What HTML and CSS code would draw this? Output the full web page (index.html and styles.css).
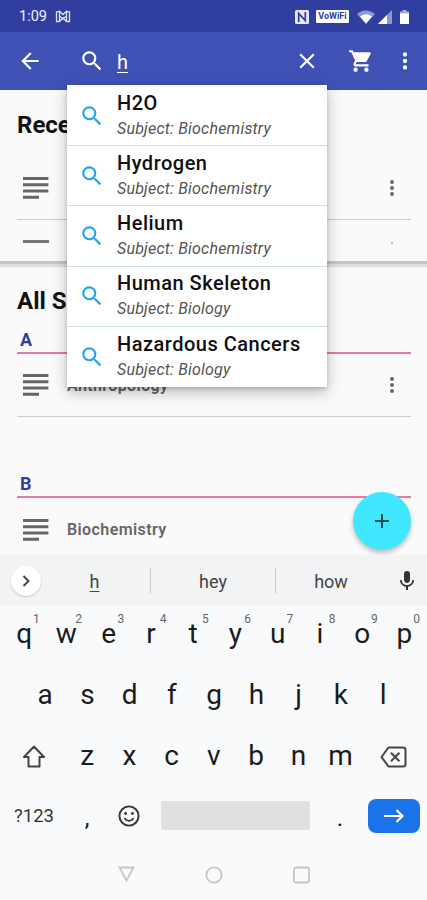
FILE: index.html
```
<!DOCTYPE html>
<html lang="en">
<head>
    <meta charset="UTF-8">
    <meta name="viewport" content="width=device-width, initial-scale=1.0">
    <title>Search</title>
    <link rel="stylesheet" href="styles.css">
</head>
<body>
    <!-- Shared icons -->
    <svg class="sprite">
        <symbol id="search" viewBox="0 0 24 24"><path d="M15.5 14h-.79l-.28-.27A6.47 6.47 0 0 0 16 9.5 6.5 6.5 0 1 0 9.5 16c1.61 0 3.09-.59 4.23-1.57l.27.28v.79l5 4.99L20.49 19l-4.99-5zm-6 0a4.5 4.5 0 1 1 0-9 4.5 4.5 0 0 1 0 9z"/></symbol>
        <symbol id="more" viewBox="0 0 24 24"><path d="M12 8a2 2 0 1 0 0-4 2 2 0 0 0 0 4zm0 2a2 2 0 1 0 0 4 2 2 0 0 0 0-4zm0 6a2 2 0 1 0 0 4 2 2 0 0 0 0-4z"/></symbol>
        <symbol id="lines" viewBox="0 0 26 22"><path d="M0 0h25.4v3H0zM0 6.3h25.4v3H0zM0 12.6h25.4v3H0zM0 18.8h16v3H0z"/></symbol>
    </svg>

    <div class="status">
        <span class="time">1:09</span>
        <svg class="notif" width="16" height="13" viewBox="0 0 16 13"><path d="M1.5 11.5v-9.500l3-.8L8 4.500l3.500-3.300 3 .8v9.500h-3V6L8 9 4.500 6v5.500z M4.500 6V2M11.500 6V2M5 11l3-3 3 3" fill="none" stroke="#dfe2f5" stroke-width="1.300"/></svg>
        <span class="spacer"></span>
        <svg class="nfc" width="14" height="14" viewBox="0 0 14 14"><rect width="14" height="14" rx="1.500" fill="#e6e8f7"/><path d="M3.700 12V3.500l6.600 7V2" fill="none" stroke="#303f9f" stroke-width="1.700"/></svg>
        <span class="vowifi">VoWiFi</span>
        <svg class="wifi" width="18" height="14" viewBox="0 0 18 14"><path d="M0 4a13 13 0 0 1 18 0L9 14z" fill="#8f98d0"/><path d="M3 6.500a9.500 9.500 0 0 1 12 0L9 13.500z" fill="#fff"/></svg>
        <svg class="signal" width="14" height="14" viewBox="0 0 14 14"><path d="M0 14L14 0v14z" fill="#8f98d0"/><path d="M0 14L9 5v9z" fill="#fff"/></svg>
        <svg class="battery" width="9" height="14" viewBox="0 0 9 14"><path d="M2.500 0h4v1.500H9V4H0V1.500h2.500z" fill="#a8afdb"/><path d="M0 3.500h9V14H0z" fill="#fff"/></svg>
    </div>

    <div class="toolbar">
        <svg class="icon back" viewBox="0 0 24 24"><path d="M20 11H7.830l5.590-5.590L12 4l-8 8 8 8 1.410-1.410L7.830 13H20z"/></svg>
        <svg class="icon find"><use href="#search"/></svg>
        <span class="query"><u>h</u></span>
        <svg class="icon clear" viewBox="0 0 24 24"><path d="M19 6.410L17.590 5 12 10.590 6.410 5 5 6.410 10.590 12 5 17.590 6.410 19 12 13.410 17.590 19 19 17.590 13.410 12z"/></svg>
        <svg class="icon cart" viewBox="0 0 24 24"><path d="M5.500 4.500h15L17 12.500H8.500z" fill="#fffbe6"/><path d="M7 18a2 2 0 1 0 0 4 2 2 0 0 0 0-4zM1 2v2h2l3.600 7.590-1.350 2.450C4.520 15.370 5.480 17 7 17h12v-2H7.420c-.14 0-.25-.11-.25-.25l.03-.12.900-1.630h7.450c.75 0 1.410-.41 1.750-1.030l3.580-6.490A1 1 0 0 0 20 4H5.210l-.94-2zm16 16a2 2 0 1 0 0 4 2 2 0 0 0 0-4z"/></svg>
        <svg class="icon"><use href="#more"/></svg>
    </div>

    <main class="content">
        <section class="recent">
            <h2>Recent</h2>
            <div class="item">
                <svg class="lines"><use href="#lines"/></svg>
                <span class="name"></span>
                <svg class="dots"><use href="#more"/></svg>
            </div>
            <div class="item collapsed">
                <span class="bar"></span>
                <span class="dot"></span>
            </div>
        </section>
        <section class="subjects">
            <h2>All Subjects</h2>
            <h3>A</h3>
            <div class="item">
                <svg class="lines"><use href="#lines"/></svg>
                <span class="name">Anthropology</span>
                <svg class="dots"><use href="#more"/></svg>
            </div>
            <h3 class="second">B</h3>
            <div class="item last">
                <svg class="lines"><use href="#lines"/></svg>
                <span class="name">Biochemistry</span>
            </div>
        </section>
        <button class="fab"><svg width="14" height="14" viewBox="0 0 14 14"><path d="M7 0v14M0 7h14" stroke="#1d4a55" stroke-width="2"/></svg></button>
    </main>

    <div class="results">
        <div class="result">
            <svg class="icon"><use href="#search"/></svg>
            <div><b>H2O</b><i>Subject: Biochemistry</i></div>
        </div>
        <div class="result">
            <svg class="icon"><use href="#search"/></svg>
            <div><b>Hydrogen</b><i>Subject: Biochemistry</i></div>
        </div>
        <div class="result">
            <svg class="icon"><use href="#search"/></svg>
            <div><b>Helium</b><i>Subject: Biochemistry</i></div>
        </div>
        <div class="result">
            <svg class="icon"><use href="#search"/></svg>
            <div><b>Human Skeleton</b><i>Subject: Biology</i></div>
        </div>
        <div class="result">
            <svg class="icon"><use href="#search"/></svg>
            <div><b>Hazardous Cancers</b><i>Subject: Biology</i></div>
        </div>
    </div>

    <div class="keyboard">
        <div class="suggestions">
            <span class="expand"><svg width="8" height="12" viewBox="0 0 8 12"><path d="M1.500 1l5 5-5 5" fill="none" stroke="#444" stroke-width="2"/></svg></span>
            <span class="word first"><u>h</u></span>
            <span class="word">hey</span>
            <span class="word third">how</span>
            <svg class="mic" viewBox="0 0 24 24"><path d="M12 14c1.660 0 3-1.340 3-3V5a3 3 0 0 0-6 0v6c0 1.660 1.340 3 3 3zm5.300-3c0 3-2.540 5.100-5.300 5.100S6.700 14 6.700 11H5c0 3.410 2.720 6.230 6 6.720V21h2v-3.280c3.280-.48 6-3.300 6-6.720z"/></svg>
        </div>
        <div class="keys top">
            <span>q<sup>1</sup></span><span>w<sup>2</sup></span><span>e<sup>3</sup></span><span>r<sup>4</sup></span><span>t<sup>5</sup></span><span>y<sup>6</sup></span><span>u<sup>7</sup></span><span>i<sup>8</sup></span><span>o<sup>9</sup></span><span>p<sup>0</sup></span>
        </div>
        <div class="keys middle">
            <span>a</span><span>s</span><span>d</span><span>f</span><span>g</span><span>h</span><span>j</span><span>k</span><span>l</span>
        </div>
        <div class="keys lower">
            <span class="shift"><svg width="24" height="23" viewBox="0 0 24 23"><path d="M12 1.500L22 12h-4.500v9.500h-11V12H2z" fill="none" stroke="#444" stroke-width="2" stroke-linejoin="round"/></svg></span>
            <span>z</span><span>x</span><span>c</span><span>v</span><span>b</span><span>n</span><span>m</span>
            <span class="delete"><svg width="27" height="22" viewBox="0 0 27 22"><path d="M8.500 1.500h14.500a2.500 2.500 0 0 1 2.500 2.500v14a2.500 2.500 0 0 1-2.500 2.500H8.500L1.500 11z" fill="none" stroke="#444" stroke-width="2" stroke-linejoin="round"/><path d="M11 6.800l8.400 8.400M19.400 6.800L11 15.200" stroke="#444" stroke-width="2"/></svg></span>
        </div>
        <div class="bottom">
            <span class="symbols">?123</span>
            <span class="punct">,</span>
            <svg class="emoji" width="22" height="22" viewBox="0 0 22 22"><circle cx="11" cy="11" r="9.600" fill="none" stroke="#333" stroke-width="1.900"/><circle cx="7.600" cy="8.500" r="1.400" fill="#333"/><circle cx="14.400" cy="8.500" r="1.400" fill="#333"/><path d="M6.500 13a5 5 0 0 0 9 0" fill="none" stroke="#333" stroke-width="1.700"/></svg>
            <span class="space"></span>
            <span class="punct">.</span>
            <span class="enter"><svg width="20" height="14" viewBox="0 0 20 14"><path d="M0 7h18M12.500 1l6 6-6 6" fill="none" stroke="#fff" stroke-width="2.200"/></svg></span>
        </div>
        <div class="nav">
            <svg width="17" height="17" viewBox="0 0 17 17"><path d="M1.500 1.500h14l-7 13z"/></svg>
            <svg width="18" height="18" viewBox="0 0 18 18"><circle cx="9" cy="9" r="7.700"/></svg>
            <svg width="17" height="18" viewBox="0 0 17 18"><rect x="1" y="1.500" width="15" height="15" rx="2"/></svg>
        </div>
    </div>
</body>
</html>
```
FILE: styles.css
```
* {
    box-sizing: border-box;
}
body {
    position: relative;
    width: 427px;
    height: 900px;
    margin: 0;
    overflow: hidden;
    font-family: Roboto, "Liberation Sans", sans-serif;
    background-color: #fafafa;
}
svg {
    display: block;
    flex: none;
}
.sprite {
    position: absolute;
    width: 0;
    height: 0;
}
.icon {
    width: 26px;
    height: 26px;
    fill: currentColor;
}
.spacer {
    flex: 1;
}

/* Status bar and toolbar */
.status {
    display: flex;
    align-items: center;
    height: 32px;
    padding: 1px 18px 0 19px;
    background-color: #303f9f;
    color: #eef0fb;
}
.time {
    width: 28px;
    margin-right: 8px;
    font-size: 14.5px;
}
.vowifi {
    width: 33px;
    height: 13px;
    margin: 0 8px 0 7px;
    border-radius: 1px;
    background-color: #fff;
    color: #303f9f;
    font-size: 9px;
    font-weight: 700;
    line-height: 13px;
    text-align: center;
}
.signal {
    margin: 0 8px 0 3px;
}
.toolbar {
    display: flex;
    align-items: center;
    height: 58px;
    padding: 0 9px 0 17px;
    background-color: #3f51b5;
    color: #fff;
}
.find {
    margin: 0 12px 0 36px;
}
.query {
    flex: 1;
    padding-top: 1px;
    font-size: 20px;
}
u {
    text-underline-offset: 3px;
    text-decoration-thickness: 1px;
}
.cart {
    margin: 0 18px 0 28px;
}

/* Subject lists */
.content {
    position: relative;
    height: 465px;
    overflow: hidden;
}
h2 {
    margin: 0;
    padding-left: 17px;
    color: #111;
    font-size: 24px;
    font-weight: 700;
    line-height: 28px;
}
h3 {
    height: 24px;
    margin: 15px 16px 0 17px;
    padding-left: 3px;
    border-bottom: 2px solid #e8799c;
    color: #303f9f;
    font-size: 18px;
    font-weight: 700;
    line-height: 20px;
}
.second {
    margin-top: 57px;
}
.recent {
    height: 174px;
    padding-top: 21px;
    border-bottom: 3px solid #c6c6c6;
}
.recent h2 {
    margin-bottom: 17px;
}
.subjects {
    padding-top: 20px;
    border-top: 3px solid #dedede;
}
.item {
    display: flex;
    align-items: center;
    height: 63px;
    margin: 0 16px 0 17px;
    padding: 0 7px 0 6px;
    border-bottom: 1px solid #ccc;
}
.recent .item {
    height: 64px;
}
.lines {
    width: 26px;
    height: 22px;
    fill: #666;
}
.name {
    flex: 1;
    margin-left: 18px;
    color: #666;
    font-size: 16px;
    font-weight: 600;
    letter-spacing: 0.4px;
}
.dots {
    width: 24px;
    height: 24px;
    fill: #666;
}
.recent .collapsed {
    justify-content: space-between;
    height: 42px;
    padding-right: 18px;
    border-bottom: 0;
}
.bar {
    width: 26px;
    height: 3px;
    background-color: #777;
}
.dot {
    width: 2px;
    height: 2px;
    margin-top: 4px;
    background-color: #bbb;
}
.last {
    border-bottom: 0;
}
.fab {
    position: absolute;
    right: 16px;
    bottom: 5px;
    display: flex;
    align-items: center;
    justify-content: center;
    width: 58px;
    height: 58px;
    padding: 0;
    border: none;
    border-radius: 50%;
    background-color: #40e8ff;
    box-shadow: 0 3px 5px rgba(0, 0, 0, 0.25);
}

/* Search suggestions over the lists */
.results {
    position: absolute;
    top: 85px;
    left: 67px;
    width: 260px;
    padding-top: 1px;
    background-color: #fff;
    box-shadow: 0 5px 14px rgba(0, 0, 0, 0.25), 0 2px 4px rgba(0, 0, 0, 0.15);
}
.result {
    display: flex;
    align-items: center;
    height: 60.2px;
    padding-left: 12px;
    border-bottom: 1px solid #cfe3ea;
    color: #2aa5ea;
}
.result:last-child {
    border-bottom: 0;
}
.result div {
    margin-left: 12px;
    white-space: nowrap;
}
.result b {
    display: block;
    color: #111;
    font-size: 20px;
    font-weight: 500;
    line-height: 25px;
    letter-spacing: 0.5px;
}
.result i {
    display: block;
    color: #555;
    font-size: 16px;
    line-height: 25px;
    letter-spacing: 0.2px;
}

/* Keyboard */
.keyboard {
    height: 345px;
    background-color: #f8fafc;
    color: #1c1c1c;
}
.suggestions {
    display: flex;
    align-items: center;
    height: 50px;
    padding: 2px 8px 0 11px;
    background-color: #f1f3f4;
}
.expand {
    display: flex;
    align-items: center;
    justify-content: center;
    width: 30px;
    height: 30px;
    border-radius: 50%;
    background-color: #fff;
    box-shadow: 0 1px 2px rgba(0, 0, 0, 0.2);
}
.word {
    width: 125px;
    height: 26px;
    border-right: 1px solid #ccc;
    color: #444;
    font-size: 18px;
    line-height: 28px;
    text-align: center;
}
.first {
    width: 110px;
    padding-right: 2px;
}
.third {
    width: 110px;
    margin-right: 9px;
    border-right: 0;
}
.mic {
    width: 24px;
    height: 24px;
    fill: #333;
}
.keys {
    display: flex;
    height: 61px;
    font-size: 28px;
    line-height: 58px;
    text-align: center;
}
.keys span {
    position: relative;
    width: 42.25px;
}
.top {
    padding-left: 3px;
}
.middle {
    padding-left: 24px;
}
.keys sup {
    position: absolute;
    top: 7px;
    left: 30px;
    color: #666;
    font-size: 12px;
    line-height: 14px;
}
.keys .shift,
.keys .delete {
    display: flex;
    justify-content: center;
    width: 64px;
    padding-top: 18px;
}
.keys .delete {
    padding-top: 19px;
}
.lower {
    padding-left: 2px;
}
.bottom {
    display: flex;
    align-items: center;
    height: 55px;
    padding: 0 7px 0 14px;
}
.symbols {
    width: 41px;
    font-size: 18.5px;
    color: #333;
}
.punct {
    width: 30px;
    padding-top: 5px;
    font-size: 24px;
    text-align: center;
}
.symbols + .punct {
    margin: 0 16px 0 17px;
}
.space {
    width: 149px;
    height: 29px;
    margin: 0 15px 0 21px;
    border-radius: 2px;
    background-color: #dfe1e0;
}
.enter {
    display: flex;
    align-items: center;
    justify-content: center;
    width: 52px;
    height: 34px;
    margin-left: auto;
    border-radius: 8px;
    background-color: #1a73e8;
}
.nav {
    display: flex;
    align-items: center;
    justify-content: space-between;
    height: 57px;
    padding: 6px 117px 0 118px;
}
.nav svg {
    fill: none;
    stroke: #c4c6c7;
    stroke-width: 1.8;
}
```
